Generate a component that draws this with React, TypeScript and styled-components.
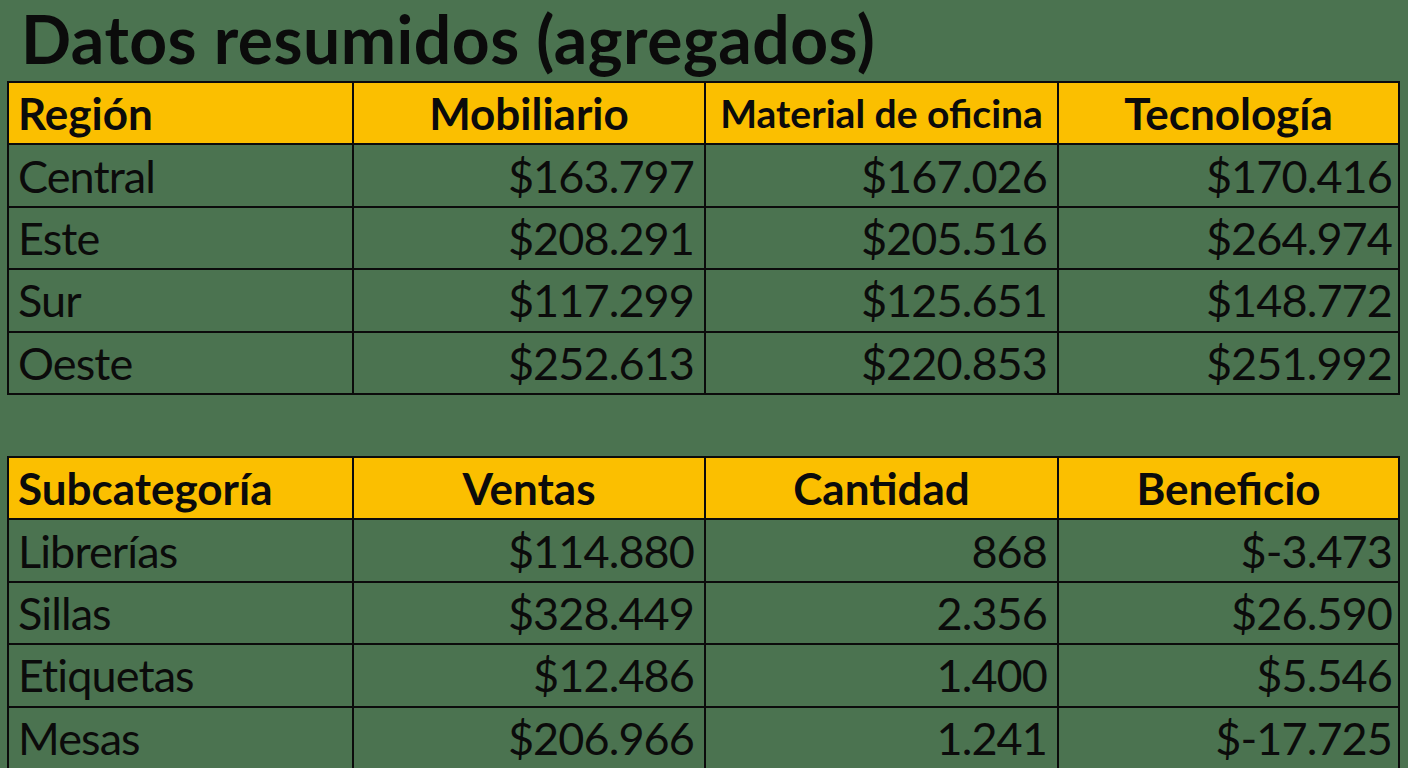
import React from "react";
import styled, { createGlobalStyle } from "styled-components";

const Global = createGlobalStyle`
  html, body { margin: 0; padding: 0; background: #4b7350; }
  body { font-family: Lato, "Open Sans", sans-serif; color: #0b0b0b; }
`;

const Page = styled.div`
  width: 1408px;
  height: 768px;
  overflow: hidden;
  background: #4b7350;
  display: flex;
  flex-direction: column;
`;

const Title = styled.h1`
  margin: 0;
  flex: none;
  padding: 0 0 3px 21px;
  box-sizing: border-box;
  font-size: 66px;
  font-weight: 700;
  line-height: 78px;
  letter-spacing: 0.5px;
  white-space: nowrap;
`;

const Table = styled.div`
  margin: 0 8px 0 7px;
  display: grid;
  grid-template-columns: 345px 352px 353px 1fr;
  grid-auto-rows: 62.4px;
  border-top: 2px solid #0b0b0b;
  border-left: 2px solid #0b0b0b;
`;

const Gap = styled.div`
  height: 61px;
  flex: none;
`;

const Cell = styled.div<{ $head?: boolean; $align: "left" | "center" | "right"; $small?: boolean }>`
  box-sizing: border-box;
  border-right: 2px solid #0b0b0b;
  border-bottom: 2px solid #0b0b0b;
  background: ${(p) => (p.$head ? "#fbbf00" : "transparent")};
  display: flex;
  align-items: center;
  justify-content: ${(p) => (p.$align === "left" ? "flex-start" : p.$align === "center" ? "center" : "flex-end")};
  padding: ${(p) => (p.$align === "left" ? "0 0 0 9px" : p.$align === "right" ? "0 10px 0 0" : "0")};
  font-weight: ${(p) => (p.$head ? 700 : 400)};
  font-size: ${(p) => (p.$head ? (p.$small ? "39px" : "44px") : "45px")};
  letter-spacing: ${(p) => (p.$head ? "0" : "-0.9px")};
  white-space: nowrap;
  overflow: hidden;

  &:nth-child(4n) {
    padding-right: ${(p) => (p.$align === "right" ? "6px" : "0")};
  }
`;

type TableData = { head: string[]; rows: string[][] };

const t1: TableData = {
  head: ["Región", "Mobiliario", "Material de oficina", "Tecnología"],
  rows: [
    ["Central", "$163.797", "$167.026", "$170.416"],
    ["Este", "$208.291", "$205.516", "$264.974"],
    ["Sur", "$117.299", "$125.651", "$148.772"],
    ["Oeste", "$252.613", "$220.853", "$251.992"],
  ],
};

const t2: TableData = {
  head: ["Subcategoría", "Ventas", "Cantidad", "Beneficio"],
  rows: [
    ["Librerías", "$114.880", "868", "$-3.473"],
    ["Sillas", "$328.449", "2.356", "$26.590"],
    ["Etiquetas", "$12.486", "1.400", "$5.546"],
    ["Mesas", "$206.966", "1.241", "$-17.725"],
  ],
};

function DataTable({ data }: { data: TableData }) {
  return (
    <Table>
      {data.head.map((h, i) => (
        <Cell key={"h" + i} $head $align={i === 0 ? "left" : "center"} $small={h.length > 14}>
          {h}
        </Cell>
      ))}
      {data.rows.map((r, ri) =>
        r.map((c, ci) => (
          <Cell key={ri + "-" + ci} $align={ci === 0 ? "left" : "right"}>
            {c}
          </Cell>
        ))
      )}
    </Table>
  );
}

export default function App() {
  return (
    <Page>
      <Global />
      <Title>Datos resumidos (agregados)</Title>
      <DataTable data={t1} />
      <Gap />
      <DataTable data={t2} />
    </Page>
  );
}
